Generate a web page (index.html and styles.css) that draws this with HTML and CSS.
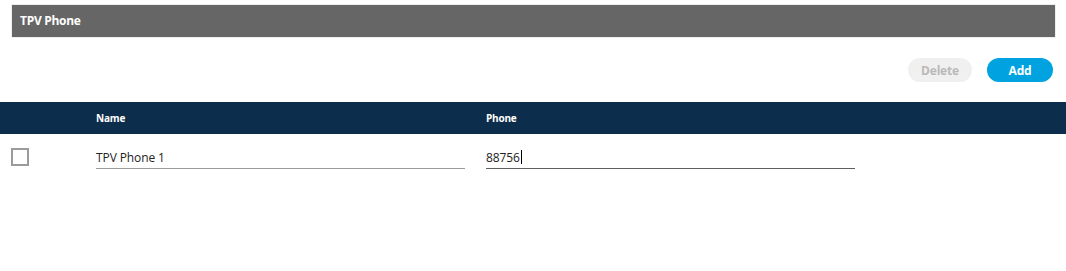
FILE: index.html
```html
<!DOCTYPE html>
<html>
<head>
<meta charset="utf-8">
<link rel="stylesheet" href="styles.css">
</head>
<body>
<div class="panel-title">TPV Phone</div>
<div class="toolbar">
  <button class="btn btn-disabled">Delete</button>
  <button class="btn btn-primary">Add</button>
</div>
<div class="grid-header">
  <div class="col-check"></div>
  <div class="col-name">Name</div>
  <div class="col-phone">Phone</div>
</div>
<div class="grid-row">
  <div class="col-check"><span class="checkbox"></span></div>
  <div class="col-name"><div class="field">TPV Phone 1</div></div>
  <div class="col-phone"><div class="field field-active">88756<span class="caret"></span></div></div>
</div>
</body>
</html>
```
FILE: styles.css
```css
html, body {
  margin: 0;
  padding: 0;
  background: #ffffff;
  font-family: "Open Sans", "Noto Sans", "Liberation Sans", sans-serif;
}

.panel-title {
  margin: 4px 10px 0 11px;
  border: 1px solid #eeeeee;
  background: #666666;
  color: #ffffff;
  height: 32px;
  line-height: 32px;
  padding-left: 8px;
  font-size: 12px;
  font-weight: 700;
  letter-spacing: -0.3px;
}

.toolbar {
  display: flex;
  justify-content: flex-end;
  gap: 15px;
  margin-top: 20px;
  padding-right: 13px;
  height: 24px;
}

.btn {
  height: 24px;
  border: none;
  border-radius: 12px;
  font-family: inherit;
  font-size: 12px;
  font-weight: 700;
  padding: 0;
  letter-spacing: -0.2px;
}

.btn-disabled {
  width: 64px;
  background: #f0f0f0;
  color: #b9b9b9;
}

.btn-primary {
  width: 66px;
  background: #00a3e0;
  color: #ffffff;
}

.grid-header,
.grid-row {
  display: grid;
  grid-template-columns: 75px 369px 369px;
  column-gap: 21px;
}

.grid-header {
  margin-top: 20px;
  height: 32px;
  background: #0c2d4b;
  color: #ffffff;
  align-items: center;
  font-size: 10px;
  font-weight: 700;
  letter-spacing: -0.2px;
}

.grid-row {
  padding-top: 14px;
}

.grid-row .col-check {
  padding-left: 11px;
}

.checkbox {
  display: block;
  width: 14px;
  height: 14px;
  border: 2px solid #9b9b9b;
}

.field {
  height: 20px;
  line-height: 20px;
  border-bottom: 1px solid #9b9b9b;
  font-size: 12px;
  color: #222222;
  letter-spacing: -0.1px;
  white-space: nowrap;
}

.field-active {
  border-bottom-color: #5f5f5f;
}

.caret {
  display: inline-block;
  width: 1px;
  height: 14px;
  background: #000000;
  vertical-align: -2px;
  margin-left: 1px;
}
```
